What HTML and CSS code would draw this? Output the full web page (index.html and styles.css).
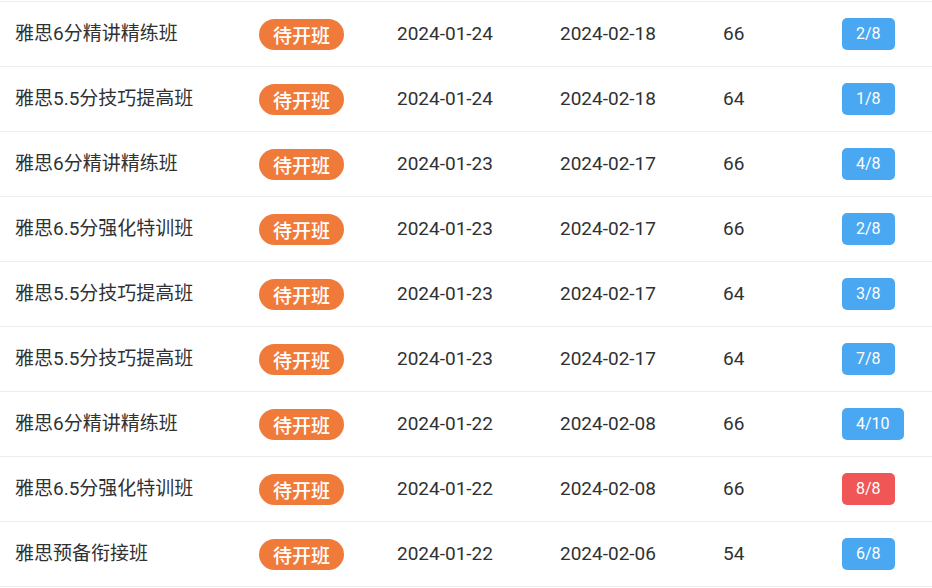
FILE: index.html
```html
<!DOCTYPE html>
<html lang="zh">
<head>
<meta charset="utf-8">
<link rel="stylesheet" href="styles.css">
</head>
<body>
<div class="list">
  <div class="row"><span class="name">雅思6分精讲精练班</span><span class="cell"><span class="tag">待开班</span></span><span class="date">2024-01-24</span><span class="date">2024-02-18</span><span class="num">66</span><span class="cell"><span class="badge">2/8</span></span></div>
  <div class="row"><span class="name">雅思5.5分技巧提高班</span><span class="cell"><span class="tag">待开班</span></span><span class="date">2024-01-24</span><span class="date">2024-02-18</span><span class="num">64</span><span class="cell"><span class="badge">1/8</span></span></div>
  <div class="row"><span class="name">雅思6分精讲精练班</span><span class="cell"><span class="tag">待开班</span></span><span class="date">2024-01-23</span><span class="date">2024-02-17</span><span class="num">66</span><span class="cell"><span class="badge">4/8</span></span></div>
  <div class="row"><span class="name">雅思6.5分强化特训班</span><span class="cell"><span class="tag">待开班</span></span><span class="date">2024-01-23</span><span class="date">2024-02-17</span><span class="num">66</span><span class="cell"><span class="badge">2/8</span></span></div>
  <div class="row"><span class="name">雅思5.5分技巧提高班</span><span class="cell"><span class="tag">待开班</span></span><span class="date">2024-01-23</span><span class="date">2024-02-17</span><span class="num">64</span><span class="cell"><span class="badge">3/8</span></span></div>
  <div class="row"><span class="name">雅思5.5分技巧提高班</span><span class="cell"><span class="tag">待开班</span></span><span class="date">2024-01-23</span><span class="date">2024-02-17</span><span class="num">64</span><span class="cell"><span class="badge">7/8</span></span></div>
  <div class="row"><span class="name">雅思6分精讲精练班</span><span class="cell"><span class="tag">待开班</span></span><span class="date">2024-01-22</span><span class="date">2024-02-08</span><span class="num">66</span><span class="cell"><span class="badge">4/10</span></span></div>
  <div class="row"><span class="name">雅思6.5分强化特训班</span><span class="cell"><span class="tag">待开班</span></span><span class="date">2024-01-22</span><span class="date">2024-02-08</span><span class="num">66</span><span class="cell"><span class="badge badge-full">8/8</span></span></div>
  <div class="row"><span class="name">雅思预备衔接班</span><span class="cell"><span class="tag">待开班</span></span><span class="date">2024-01-22</span><span class="date">2024-02-06</span><span class="num">54</span><span class="cell"><span class="badge">6/8</span></span></div>
</div>
</body>
</html>
```
FILE: styles.css
```css
html, body {
  margin: 0;
  padding: 0;
  background: #ffffff;
}
body {
  font-family: Roboto, "Noto Sans CJK SC", sans-serif;
  color: #303133;
  overflow: hidden;
}
.list {
  margin-top: 1px;
  border-top: 1px solid #ebedf0;
}
.row {
  display: grid;
  grid-template-columns: 244px 138px 163px 163px 119px 1fr;
  align-items: center;
  height: 64px;
  padding-left: 15px;
  border-bottom: 1px solid #ebedf0;
  font-size: 19px;
  line-height: 22px;
}
.cell {
  display: flex;
  align-items: center;
}
.tag {
  display: inline-flex;
  align-items: center;
  justify-content: center;
  height: 31px;
  padding: 0 14px;
  border-radius: 16px;
  background: #f07a3a;
  color: #ffffff;
  font-size: 19px;
  line-height: 1;
  font-weight: 500;
  font-family: "Noto Sans CJK SC", sans-serif;
}
.badge {
  display: inline-flex;
  align-items: center;
  justify-content: center;
  height: 32px;
  padding: 0 14px;
  border-radius: 5px;
  background: #4aa8f2;
  color: #ffffff;
  font-size: 16px;
  line-height: 1;
  font-family: Roboto, sans-serif;
}
.badge-full {
  background: #f05656;
}
```
